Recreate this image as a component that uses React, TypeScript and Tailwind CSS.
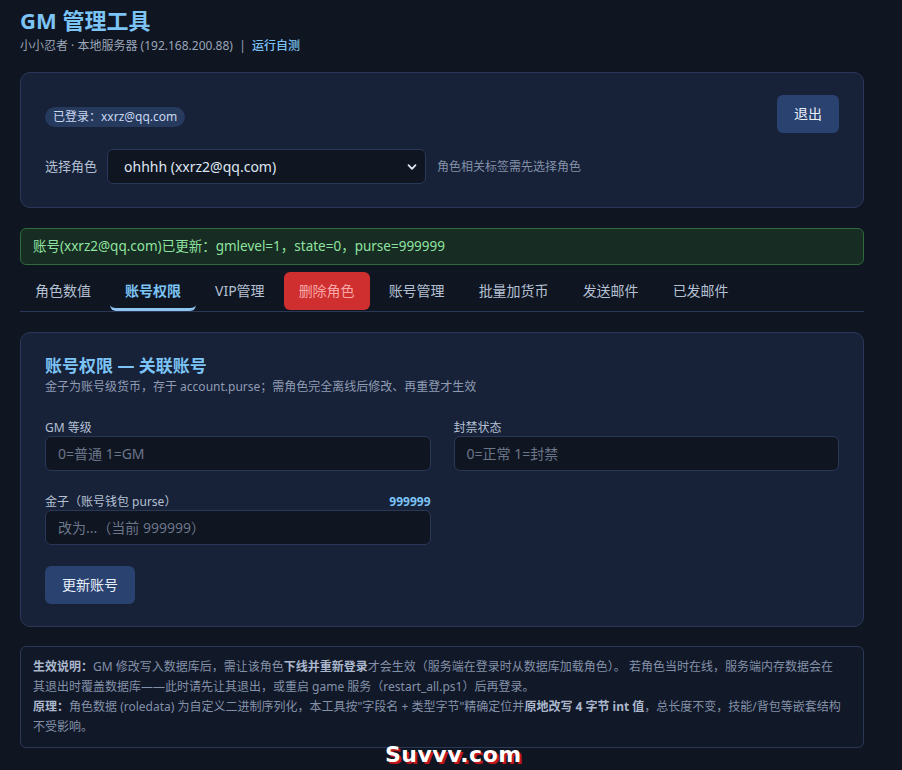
import React from "react";

const tabs = ["角色数值", "账号权限", "VIP管理", "删除角色", "账号管理", "批量加货币", "发送邮件", "已发邮件"];

export default function App() {
  return (
    <div className="relative min-h-screen bg-[#0f1521] font-['Noto_Sans','Noto_Sans_CJK_SC',sans-serif] text-[#cbd5e1]">
      <div className="px-5 pt-[6px] pb-6 w-[884px]">
        <h1 className="text-[22px] leading-[28px] font-bold text-[#7cc4f5]">GM 管理工具</h1>
        <div className="mt-1 text-xs leading-4 text-[#9aa5b8]">
          小小忍者 · 本地服务器 (192.168.200.88)&nbsp;&nbsp;|&nbsp;&nbsp;<span className="text-[#7cc4f5] font-medium">运行自测</span>
        </div>

        <div className="mt-[18px] rounded-[10px] border border-[#2a3756] bg-[#172138] px-6 pt-[22px] pb-[23px]">
          <div className="flex items-center justify-between">
            <span className="mt-[6px] rounded-full bg-[#263a5e] px-2 text-xs leading-5 text-[#c9d7ef]">已登录：xxrz@qq.com</span>
            <button className="h-[38px] rounded-md bg-[#2a4270] px-[17px] text-sm text-[#e8eefa]">退出</button>
          </div>
          <div className="mt-4 flex items-center">
            <span className="text-[13px] text-[#b4c0d3]">选择角色</span>
            <div className="ml-[10px] flex h-[35px] w-[319px] items-center justify-between rounded-md border border-[#2a3756] bg-[#0f1521] pl-4 pr-2">
              <span className="text-sm text-[#dfe6f1]">ohhhh (xxrz2@qq.com)</span>
              <svg width="10" height="10" viewBox="0 0 10 10" fill="none">
                <path d="M1.5 3.2 5 6.8 8.5 3.2" stroke="#dfe6f1" strokeWidth="1.8" strokeLinecap="round" strokeLinejoin="round" />
              </svg>
            </div>
            <span className="ml-[11px] text-xs text-[#8391a8]">角色相关标签需先选择角色</span>
          </div>
        </div>

        <div className="mt-5 rounded-md border border-[#2f6a3a] bg-[#172c22] px-3 text-[13.5px] leading-[35px] text-[#8fe3a0]">
          账号(xxrz2@qq.com)已更新：gmlevel=1，state=0，purse=999999
        </div>

        <div className="mt-[7px] flex gap-1 border-b border-[#2a3756]">
          {tabs.map((t) => {
            if (t === "账号权限")
              return (
                <div key={t} className="rounded-b-md border-b-[3px] border-[#8ec5f0] px-[15px] pt-[9px] pb-[6px] text-sm leading-5 font-bold text-[#7cc4f5]">
                  {t}
                </div>
              );
            if (t === "删除角色")
              return (
                <div key={t} className="mb-[1px] rounded-md bg-[#cf2f2e] px-[15px] py-[9px] text-sm leading-5 text-[#f8a8a8]">
                  {t}
                </div>
              );
            return (
              <div key={t} className="px-[15px] py-[9px] text-sm leading-5 text-[#b4c0d3]">
                {t}
              </div>
            );
          })}
        </div>

        <div className="mt-5 rounded-[10px] border border-[#2a3756] bg-[#172138] px-6 pt-[21px] pb-[22px]">
          <h2 className="text-[17px] leading-6 font-bold text-[#7cc4f5]">账号权限 — 关联账号</h2>
          <p className="text-xs leading-[18px] text-[#8f9cb3]">金子为账号级货币，存于 account.purse；需角色完全离线后修改、再重登才生效</p>
          <div className="mt-6 grid grid-cols-2 gap-x-[23px] gap-y-[23px]">
            <div>
              <div className="text-xs leading-4 text-[#b4c0d3]">GM 等级</div>
              <div className="flex h-[35px] items-center rounded-md border border-[#2a3756] bg-[#0f1521] px-3 text-sm text-[#6b7689]">0=普通 1=GM</div>
            </div>
            <div>
              <div className="text-xs leading-4 text-[#b4c0d3]">封禁状态</div>
              <div className="flex h-[35px] items-center rounded-md border border-[#2a3756] bg-[#0f1521] px-3 text-sm text-[#6b7689]">0=正常 1=封禁</div>
            </div>
            <div>
              <div className="flex justify-between text-xs leading-4 text-[#b4c0d3]">
                <span>金子（账号钱包 purse）</span>
                <span className="font-bold text-[#7cc4f5]">999999</span>
              </div>
              <div className="flex h-[35px] items-center rounded-md border border-[#2a3756] bg-[#0f1521] px-3 text-sm text-[#6b7689]">改为...（当前 999999）</div>
            </div>
          </div>
          <button className="mt-[21px] h-[38px] rounded-md bg-[#2a4270] px-[17px] text-sm text-[#e8eefa]">更新账号</button>
        </div>

        <div className="mt-[19px] rounded-md border border-[#2a3756] bg-[#111828] pl-3 pr-[19px] py-[10px] text-xs leading-5 text-[#8391a8]">
          <div>
            <b className="text-[#aab7cc]">生效说明：</b>GM 修改写入数据库后，需让该角色<b className="text-[#aab7cc]">下线并重新登录</b>才会生效（服务端在登录时从数据库加载角色）。 若角色当时在线，服务端内存数据会在其退出时覆盖数据库——此时请先让其退出，或重启 game 服务（restart_all.ps1）后再登录。
          </div>
          <div>
            <b className="text-[#aab7cc]">原理：</b>角色数据 (roledata) 为自定义二进制序列化，本工具按"字段名 + 类型字节"精确定位并<b className="text-[#aab7cc]">原地改写 4 字节 int 值</b>，总长度不变，技能/背包等嵌套结构不受影响。
          </div>
        </div>
      </div>
      <div className="absolute left-[385px] top-[743px] font-['DejaVu_Sans',sans-serif] text-[22px] leading-6 font-black tracking-[0.5px] text-white [text-shadow:2px_2px_0_#c0161c]">
        Suvvv.com
      </div>
    </div>
  );
}
